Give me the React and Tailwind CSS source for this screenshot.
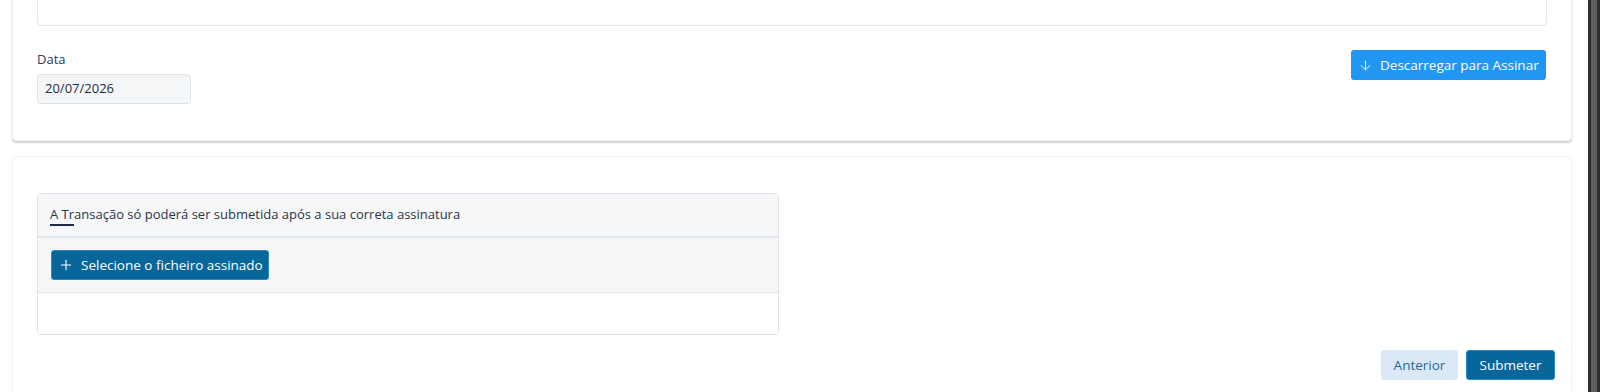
import { ArrowDown, Plus } from 'lucide-react'

const App = () => {
  return (
    <div
      className="flex h-[392px] w-[1600px] overflow-hidden bg-white text-[#2b3950]"
      style={{ fontFamily: '"Open Sans", "Liberation Sans", sans-serif' }}
    >
      <main className="flex-1 pl-[12px] pr-[16px]">
        {/* Top card */}
        <div className="-mt-[40px] rounded-[4px] border border-[#efefef] bg-white px-[24px] pb-[36px] pt-[24px] shadow-[0_2px_2px_rgba(0,0,0,0.18)]">
          <div className="h-[41px] rounded-[4px] border border-[#e6e8ea] bg-white" />

          <div className="mt-[24px] flex items-start justify-between">
            <div>
              <label className="block text-[13px] leading-[18px] text-[#2b3a55]">Data</label>
              <div className="mt-[6px] flex h-[30px] w-[154px] items-center rounded-[4px] border border-[#dfe2e6] bg-[#f5f6f8] px-[7px] text-[13px] text-[#1f2b3d]">
                20/07/2026
              </div>
            </div>
            <button className="mr-[1px] flex h-[30px] w-[195px] items-center gap-[7px] rounded-[3px] bg-[#2196f3] pl-[7px] text-[13.5px] text-white">
              <ArrowDown className="h-[15px] w-[15px]" strokeWidth={1.6} />
              Descarregar para Assinar
            </button>
          </div>
        </div>

        {/* Second card */}
        <div className="mt-[15px] rounded-[4px] border border-[#f0f0f0] bg-white pb-[24px] pl-[24px] pr-[16px] pt-[36px]">
          <div className="w-[742px] overflow-hidden rounded-[4px] border border-[#dfe2e6]">
            <div className="flex h-[44px] items-center border-b-2 border-[#e4e7ea] bg-[#f6f7f9] px-[12px]">
              <span className="relative text-[13px] text-[#2b3548]">
                A Transação só poderá ser submetida após a sua correta assinatura
                <span className="absolute left-0 top-[19px] h-[2px] w-[24px] bg-[#1c2c4a]" />
              </span>
            </div>
            <div className="flex h-[55px] items-center border-b border-[#e4e7ea] bg-[#f6f7f9] px-[13px]">
              <button className="flex h-[30px] w-[218px] items-center gap-[7px] rounded-[3px] border border-[#2b88c4] bg-[#07679b] pl-[6px] text-[13.5px] text-white">
                <Plus className="h-[16px] w-[16px]" strokeWidth={1.6} />
                Selecione o ficheiro assinado
              </button>
            </div>
            <div className="h-[41px] bg-white" />
          </div>

          <div className="mt-[15px] flex justify-end gap-[8px]">
            <button className="h-[30px] w-[77px] rounded-[3px] bg-[#dbe8f5] text-[13.5px] text-[#1f6a9a]">
              Anterior
            </button>
            <button className="h-[30px] w-[89px] rounded-[3px] border border-[#2b88c4] bg-[#07679b] text-[13.5px] text-white">
              Submeter
            </button>
          </div>
        </div>
      </main>

      {/* Window edge */}
      <div className="flex w-[12px]">
        <div className="w-[3px] bg-[#2e2e2e]" />
        <div className="w-[6px] bg-[#5e5e5e]" />
        <div className="w-[3px] bg-[#2e2e2e]" />
      </div>
    </div>
  )
}

export default App
